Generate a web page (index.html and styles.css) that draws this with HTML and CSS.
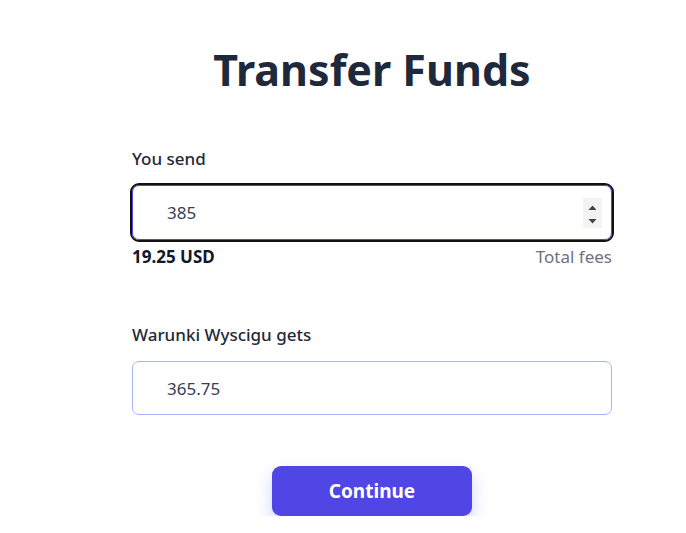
FILE: index.html
```html
<!DOCTYPE html>
<html>
<head>
<meta charset="utf-8">
<link rel="stylesheet" href="styles.css">
</head>
<body>
<main class="card">
  <h1 class="title">Transfer Funds</h1>
  <div class="group">
    <label class="label">You send</label>
    <div class="field field-focus">
      <input class="field-input" type="text" value="385">
      <span class="spinner">
        <svg width="19" height="30" viewBox="0 0 19 30"><path d="M5.5 12 L9.5 7.5 L13.5 12 Z" fill="#444"/><path d="M5.5 21 L9.5 25.5 L13.5 21 Z" fill="#444"/></svg>
      </span>
    </div>
    <div class="meta">
      <span class="fee">19.25 USD</span>
      <span class="fee-label">Total fees</span>
    </div>
  </div>
  <div class="group group-second">
    <label class="label">Warunki Wyscigu gets</label>
    <div class="field field-idle">
      <input class="field-input" type="text" value="365.75">
    </div>
  </div>
  <div class="actions">
    <button class="btn">Continue</button>
  </div>
</main>
</body>
</html>
```
FILE: styles.css
```css
* { box-sizing: border-box; }
html, body { margin: 0; padding: 0; background: #fff; }
body { font-family: "Noto Sans", "Open Sans", sans-serif; color: #1f2937; }
.card { width: 480px; margin-left: 132px; padding-top: 40px; }
.title { margin: 0; text-align: center; font-size: 43px; font-weight: 700; line-height: 60px; color: #1e293b; }
.group { margin-top: 47px; }
.group-second { margin-top: 55px; }
.label { display: block; font-size: 17px; font-weight: 500; line-height: 24px; color: #1f2937; margin-bottom: 14px; }
.field { display: flex; align-items: center; height: 55px; border-radius: 7px; background: #fff; padding: 0 9px 0 34px; }
.field-focus { border: 1px solid #4f46e5; outline: 2px solid #111; }
.field-idle { border: 1px solid #a5b4fc; height: 54px; }
.field-input { flex: 1; border: 0; outline: 0; background: transparent; font: inherit; font-size: 17px; color: #374151; padding: 0; }
.spinner { width: 19px; height: 30px; background: #f3f3f3; display: flex; }
.meta { display: flex; justify-content: space-between; margin-top: 6px; font-size: 17px; line-height: 22px; }
.fee { font-weight: 700; color: #111827; }
.fee-label { color: #6b7280; }
.actions { display: flex; justify-content: center; margin-top: 51px; }
.btn { width: 200px; height: 50px; border: 0; border-radius: 9px; background: #4f46e5; color: #fff; font-family: inherit; font-size: 19px; font-weight: 700; box-shadow: 0 8px 16px rgba(99, 102, 241, 0.3); }
```
